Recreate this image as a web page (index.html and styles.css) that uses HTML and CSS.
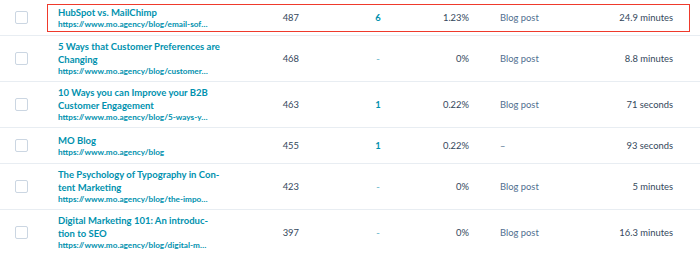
FILE: index.html
```html
<!DOCTYPE html>
<html lang="en">
<head>
<meta charset="utf-8">
<title>Blog posts</title>
<link rel="stylesheet" href="styles.css">
</head>
<body>
<div class="table">
  <div class="row highlighted">
    <div class="c-check"><span class="checkbox"></span></div>
    <div class="c-title"><a class="title">HubSpot vs. MailChimp</a><span class="url">https://www.mo.agency/blog/email-sof…</span></div>
    <div class="c-views">487</div>
    <div class="c-contacts">6</div>
    <div class="c-rate">1.23%</div>
    <div class="c-type">Blog post</div>
    <div class="c-time">24.9 minutes</div>
    <div class="highlight-box"></div>
  </div>
  <div class="row">
    <div class="c-check"><span class="checkbox"></span></div>
    <div class="c-title"><a class="title">5 Ways that Customer Preferences are<br>Changing</a><span class="url">https://www.mo.agency/blog/customer…</span></div>
    <div class="c-views">468</div>
    <div class="c-contacts"><span class="dash">-</span></div>
    <div class="c-rate">0%</div>
    <div class="c-type">Blog post</div>
    <div class="c-time">8.8 minutes</div>
  </div>
  <div class="row">
    <div class="c-check"><span class="checkbox"></span></div>
    <div class="c-title"><a class="title">10 Ways you can Improve your B2B<br>Customer Engagement</a><span class="url">https://www.mo.agency/blog/5-ways-y…</span></div>
    <div class="c-views">463</div>
    <div class="c-contacts">1</div>
    <div class="c-rate">0.22%</div>
    <div class="c-type">Blog post</div>
    <div class="c-time">71 seconds</div>
  </div>
  <div class="row">
    <div class="c-check"><span class="checkbox"></span></div>
    <div class="c-title"><a class="title">MO Blog</a><span class="url">https://www.mo.agency/blog</span></div>
    <div class="c-views">455</div>
    <div class="c-contacts">1</div>
    <div class="c-rate">0.22%</div>
    <div class="c-type">–</div>
    <div class="c-time">93 seconds</div>
  </div>
  <div class="row">
    <div class="c-check"><span class="checkbox"></span></div>
    <div class="c-title"><a class="title">The Psychology of Typography in Con-<br>tent Marketing</a><span class="url">https://www.mo.agency/blog/the-impo…</span></div>
    <div class="c-views">423</div>
    <div class="c-contacts"><span class="dash">-</span></div>
    <div class="c-rate">0%</div>
    <div class="c-type">Blog post</div>
    <div class="c-time">5 minutes</div>
  </div>
  <div class="row">
    <div class="c-check"><span class="checkbox"></span></div>
    <div class="c-title"><a class="title">Digital Marketing 101: An introduc-<br>tion to SEO</a><span class="url">https://www.mo.agency/blog/digital-m…</span></div>
    <div class="c-views">397</div>
    <div class="c-contacts"><span class="dash">-</span></div>
    <div class="c-rate">0%</div>
    <div class="c-type">Blog post</div>
    <div class="c-time">16.3 minutes</div>
  </div>
</div>
</body>
</html>
```

FILE: styles.css
```css
html, body {
  margin: 0;
  padding: 0;
  background: #ffffff;
}

body {
  font-family: "Lato", "Open Sans", sans-serif;
  color: #33475b;
  font-size: 9.4px;
}

.table {
  width: 700px;
}

.row {
  position: relative;
  display: grid;
  grid-template-columns: 47px 213px 79px 78px 52px 111px 93px 1fr;
  align-items: center;
  box-sizing: border-box;
  min-height: 36px;
  padding: 4px 0;
  border-bottom: 1px solid #e8edf2;
}

.c-check {
  padding-left: 15px;
  display: flex;
  align-items: center;
}

.checkbox {
  display: block;
  width: 11px;
  height: 11px;
  border: 1px solid #cbd6e2;
  border-radius: 2px;
  background: #ffffff;
}

.c-title {
  padding-left: 11px;
  display: flex;
  flex-direction: column;
}

.title {
  color: #0091ae;
  font-weight: 700;
  font-size: 9.5px;
  line-height: 13px;
  white-space: nowrap;
}

.url {
  color: #0091ae;
  font-weight: 700;
  font-size: 8.2px;
  line-height: 11px;
  white-space: nowrap;
}

.c-views {
  text-align: right;
  padding-right: 40px;
}

.c-contacts {
  text-align: center;
  color: #0091ae;
  font-weight: 700;
}

.dash {
  color: #7fc1d3;
}

.c-rate {
  text-align: right;
}

.c-type {
  padding-left: 31px;
  color: #516f90;
}

.c-time {
  text-align: right;
}

.highlight-box {
  position: absolute;
  left: 47px;
  top: 4px;
  width: 643px;
  height: 28px;
  box-sizing: border-box;
  border: 1.5px solid #ef3a2c;
  pointer-events: none;
}
```
